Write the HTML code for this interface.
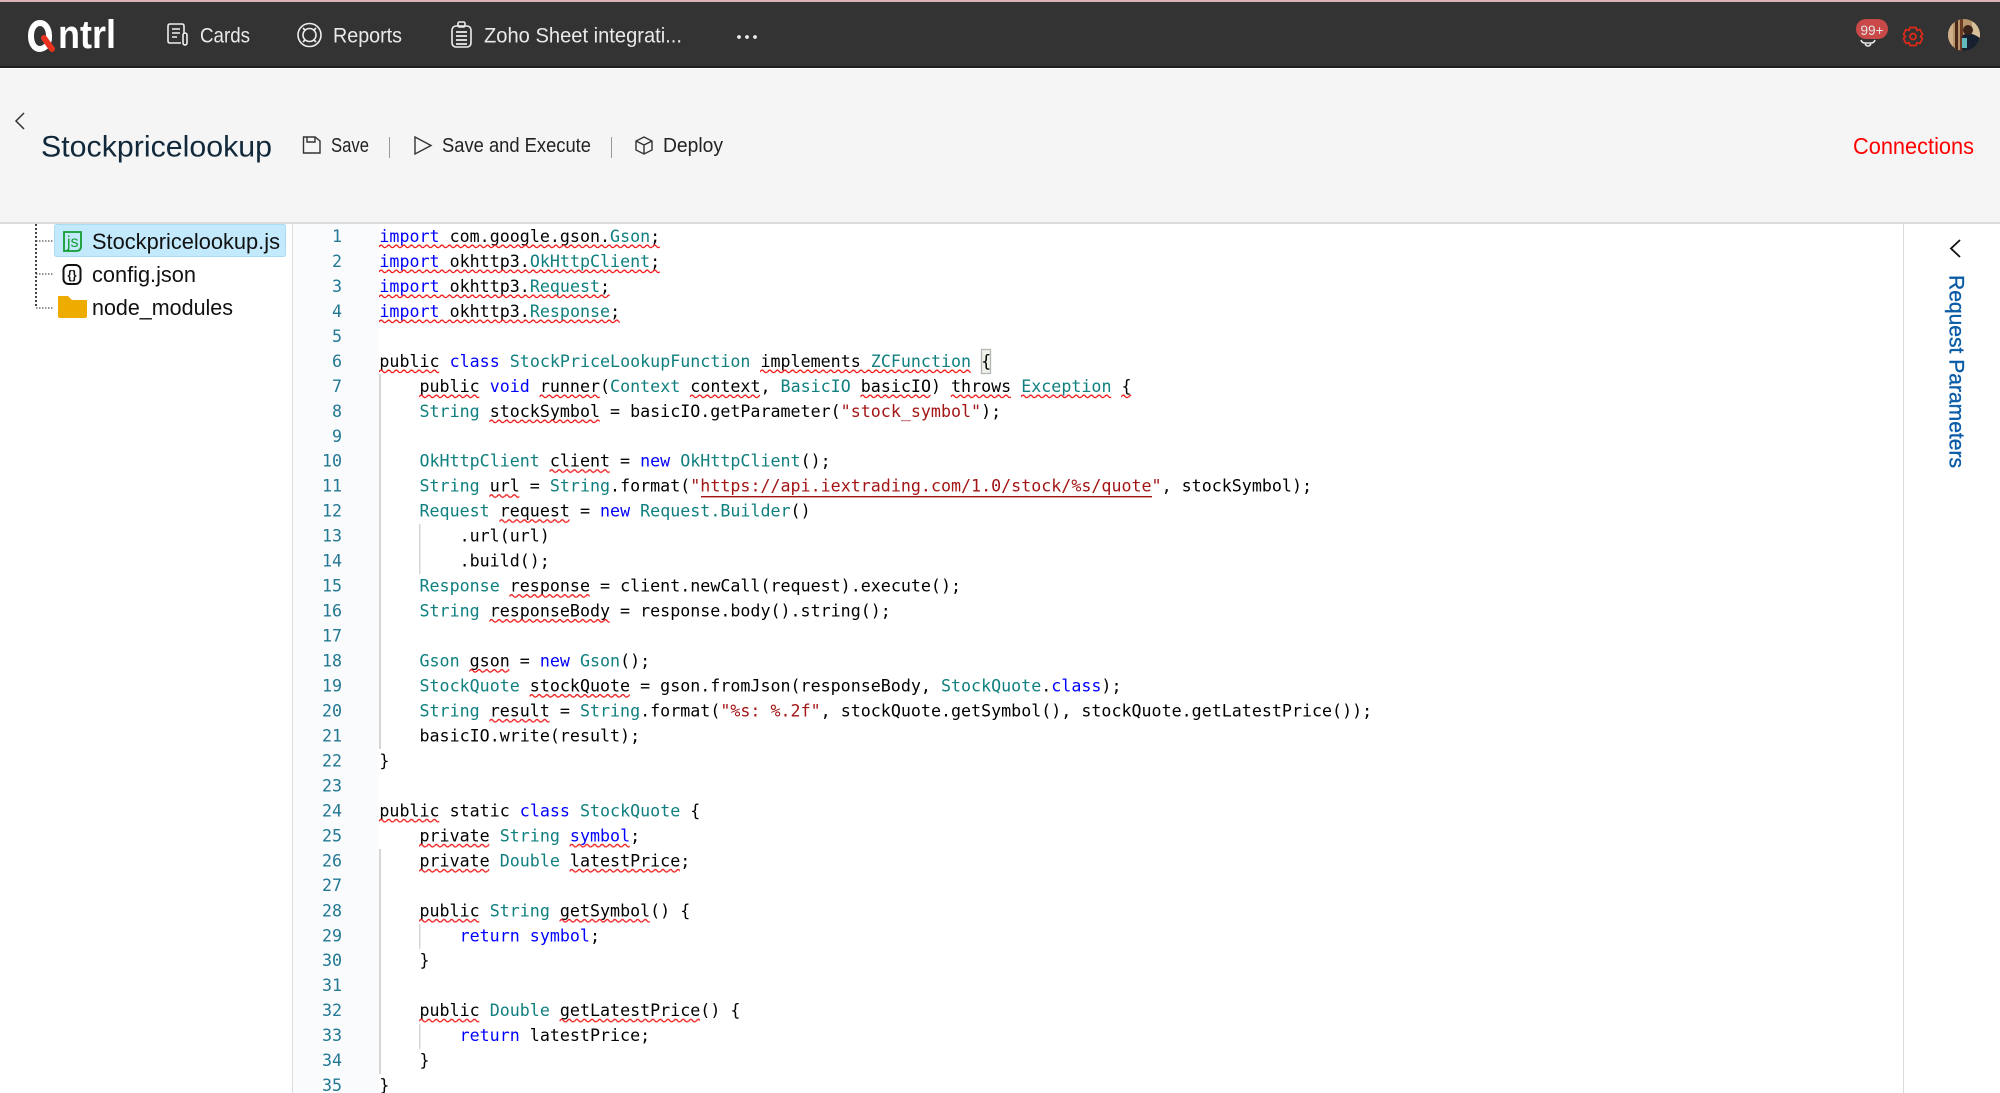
<!DOCTYPE html>
<html><head><meta charset="utf-8"><title>Stockpricelookup</title>
<style>
html,body{margin:0;padding:0;background:#fff;width:2000px;height:1093px;overflow:hidden}
svg{display:block;position:absolute;left:0;top:0}
text{font-family:"Liberation Sans",sans-serif}
.c text,text.c{font-family:"DejaVu Sans Mono",monospace;font-size:16.66px;white-space:pre;fill:#000}
.k{fill:#0000ff}.t{fill:#0f7f7f}.s{fill:#a31515}
.n text{font-family:"DejaVu Sans Mono",monospace;font-size:16.66px;fill:#237893;text-anchor:end}
.q rect{fill:url(#w)}
</style></head><body>
<svg width="2000" height="1093" viewBox="0 0 2000 1093" xmlns="http://www.w3.org/2000/svg">
<defs>
<pattern id="w" patternUnits="userSpaceOnUse" width="7.6" height="5"><path d="M0 3Q1.9 -.4 3.8 2.2T7.6 2.6" fill="none" stroke="#f01818" stroke-width="1.3"/></pattern>
<clipPath id="av"><circle cx="1964" cy="35" r="16"/></clipPath>
</defs>
<!-- top bar -->
<rect width="2000" height="2" fill="#d8b4b8"/>
<rect y="2" width="2000" height="65" fill="#333"/>
<rect y="66" width="2000" height="2" fill="#1f1f1f"/>
<rect y="68" width="2000" height="1" fill="#fff"/>
<rect y="69" width="2000" height="153" fill="#f5f5f6"/>
<rect y="222" width="2000" height="2" fill="#dcdcdc"/>
<!-- logo -->
<path d="M47 45.500C44 48 42 49 40 49C34 49 31 43 31 36C31 28 35 23 40 23C45 23 49 28 49 36C49 38 49 40 48.500 41" fill="none" stroke="#fff" stroke-width="6" stroke-linecap="round"/>
<path d="M44 38L52 49" stroke="#e8321f" stroke-width="6" stroke-linecap="round"/>
<text x="58" y="48" font-size="40" font-weight="700" fill="#fff" textLength="58" lengthAdjust="spacingAndGlyphs">ntrl</text>
<!-- nav -->
<g fill="none" stroke="#eee" stroke-width="1.6">
<path d="M184 34V26Q184 24 182 24H170Q168 24 168 26V41Q168 43 170 43H181"/><path d="M172 29H180M172 33H180M172 37H177"/><rect x="183" y="33" width="4" height="12" rx="2"/>
<circle cx="309.5" cy="35" r="11.5"/><circle cx="309.5" cy="35" r="6.5"/><path d="M303 28l2 2M316 28l-2 2M303 42l2-2M316 42l-2-2"/>
<rect x="452" y="26" width="19" height="21" rx="4"/><rect x="458" y="22" width="7" height="5" rx="1.5"/><path d="M456 32h11M456 36h11M456 40h11M456 44h11" stroke-width="1.8"/>
</g>
<g fill="#e9e9e9" font-size="21">
<text x="200" y="42.500" textLength="50" lengthAdjust="spacingAndGlyphs">Cards</text>
<text x="333" y="42.500" textLength="69" lengthAdjust="spacingAndGlyphs">Reports</text>
<text x="484" y="42.500" textLength="198" lengthAdjust="spacingAndGlyphs">Zoho Sheet integrati...</text>
</g>
<circle cx="739" cy="37" r="1.9" fill="#eee"/><circle cx="747" cy="37" r="1.9" fill="#eee"/><circle cx="755" cy="37" r="1.9" fill="#eee"/>
<!-- right icons -->
<path d="M1861 40Q1862 43 1865 43H1871Q1874 43 1875 40M1865 44Q1868 48 1871 44" fill="none" stroke="#e8e8e8" stroke-width="1.6"/>
<rect x="1856" y="19" width="32" height="20" rx="10" fill="#c94848"/>
<text x="1872" y="35" font-size="14" fill="#e6e6e6" text-anchor="middle" textLength="23" lengthAdjust="spacingAndGlyphs">99+</text>
<g fill="none" stroke="#e22a18" stroke-width="1.700" stroke-linejoin="round" transform="translate(0,-1.500)">
<path d="M1910 29h6l1 3 3-1 2.500 5-2 2 2 2-2.500 5-3-1-1 3h-6l-1-3-3 1-2.500-5 2-2-2-2 2.500-5 3 1z"/>
<circle cx="1913" cy="38" r="3"/></g>
<g clip-path="url(#av)"><rect x="1948" y="19" width="32" height="32" fill="#b8946c"/><rect x="1948" y="19" width="5" height="32" fill="#d0b08a"/><rect x="1955" y="19" width="3" height="32" fill="#4a2617"/><rect x="1960" y="19" width="3" height="32" fill="#6a3a22"/><rect x="1972" y="19" width="8" height="20" fill="#d6c09a"/><path d="M1962 36Q1968 30 1980 38V52H1962z" fill="#16202f"/><circle cx="1968" cy="30" r="5" fill="#3a241c"/><path d="M1962 38h5v10h-5z" fill="#63b8bd"/></g>
<!-- header content -->
<path d="M24 113L16 121L24 129" fill="none" stroke="#333" stroke-width="1.5"/>
<text x="41" y="156.500" font-size="30" fill="#12293b" textLength="231" lengthAdjust="spacingAndGlyphs">Stockpricelookup</text>
<g fill="none" stroke="#333" stroke-width="1.4">
<path d="M303.500 137H315L320 141V153H303.500z"/><path d="M307 137v5h8v-5"/>
<path d="M415 137L431 145.500L415 154z"/>
<path d="M644 137L652 141V150L644 154L636 150V141z"/><path d="M636 141L644 145L652 141M644 145V154"/>
</g>
<rect x="389" y="137" width="1" height="21" fill="#999"/><rect x="611" y="137" width="1" height="21" fill="#999"/>
<g fill="#222" font-size="20">
<text x="331" y="152.200" textLength="38" lengthAdjust="spacingAndGlyphs">Save</text>
<text x="442" y="152.200" textLength="149" lengthAdjust="spacingAndGlyphs">Save and Execute</text>
<text x="663" y="152.200" textLength="60" lengthAdjust="spacingAndGlyphs">Deploy</text>
</g>
<text x="1853" y="154" font-size="23" fill="#f00" textLength="121" lengthAdjust="spacingAndGlyphs">Connections</text>
<!-- file tree -->
<path d="M36 224V308" fill="none" stroke="#444" stroke-width="2" stroke-dasharray="2 2"/>
<path d="M36 241H54M36 274H54M36 308H54" fill="none" stroke="#555" stroke-width="1.200" stroke-dasharray="1.500 1.500"/>
<rect x="54.500" y="224.500" width="231" height="32" rx="2" fill="#c3eafc" stroke="#aadcf3"/>
<path d="M64 232H81V246Q81 251 76 251H64z" fill="none" stroke="#149a2e" stroke-width="1.800"/>
<text x="67" y="247" font-size="16" fill="#149a2e">js</text>
<rect x="63.500" y="265" width="17" height="19" rx="5" fill="#fff" stroke="#111" stroke-width="2"/>
<text x="72" y="279" font-size="12" fill="#111" text-anchor="middle" font-weight="700">{}</text>
<path d="M58 296H68L72 300H87V316Q87 318 85 318H60Q58 318 58 316z" fill="#eeab00"/>
<g fill="#111" font-size="22">
<text x="92" y="249" textLength="188" lengthAdjust="spacingAndGlyphs">Stockpricelookup.js</text>
<text x="92" y="282" textLength="104" lengthAdjust="spacingAndGlyphs">config.json</text>
<text x="92" y="315" textLength="141" lengthAdjust="spacingAndGlyphs">node_modules</text>
</g>
<!-- panel structure -->
<rect x="292" y="224" width="1" height="869" fill="#dcdcdc"/>
<rect x="293" y="224" width="86" height="869" fill="#fafbfd"/>
<rect x="1903" y="224" width="1" height="869" fill="#dcdcdc"/>
<path d="M1960 240L1951 248.500L1960 257" fill="none" stroke="#111" stroke-width="1.800"/>
<text transform="translate(1949.500,275) rotate(90)" font-size="21" fill="#0b5ca6" stroke="#0b5ca6" stroke-width=".35" textLength="193" lengthAdjust="spacingAndGlyphs">Request Parameters</text>
<!-- guides -->
<g fill="#d6d6d6">
<rect x="379" y="374" width="2" height="375"/><rect x="379" y="849" width="2" height="225"/>
<rect x="419" y="524" width="1.500" height="50"/><rect x="419" y="924" width="1.500" height="25"/><rect x="419" y="1024" width="1.500" height="25"/>
</g>
<rect x="981.500" y="349.500" width="9" height="24" fill="#eef4ea" stroke="#b5b5b5" stroke-width="1.300"/>
<!-- line numbers -->
<g class="n">
<text x="342" y="242">1</text><text x="342" y="267">2</text><text x="342" y="292">3</text><text x="342" y="317">4</text><text x="342" y="342">5</text><text x="342" y="367">6</text><text x="342" y="392">7</text><text x="342" y="417">8</text><text x="342" y="442">9</text><text x="342" y="466.700">10</text><text x="342" y="491.700">11</text><text x="342" y="516.700">12</text><text x="342" y="541.600">13</text><text x="342" y="566.600">14</text><text x="342" y="591.600">15</text><text x="342" y="616.500">16</text><text x="342" y="641.500">17</text><text x="342" y="666.500">18</text><text x="342" y="691.500">19</text><text x="342" y="716.400">20</text><text x="342" y="741.400">21</text><text x="342" y="766.400">22</text><text x="342" y="791.300">23</text><text x="342" y="816.300">24</text><text x="342" y="841.300">25</text><text x="342" y="866.400">26</text><text x="342" y="891.200">27</text><text x="342" y="916.400">28</text><text x="342" y="941.300">29</text><text x="342" y="966.100">30</text><text x="342" y="991.100">31</text><text x="342" y="1016.200">32</text><text x="342" y="1041.200">33</text><text x="342" y="1066">34</text><text x="342" y="1091">35</text>
</g>
<!-- code -->
<g class="c" transform="translate(.4,0)">
<text x="379" y="242"><tspan class="k">import</tspan> com.google.gson.<tspan class="t">Gson</tspan>;</text>
<text x="379" y="267"><tspan class="k">import</tspan> okhttp3.<tspan class="t">OkHttpClient</tspan>;</text>
<text x="379" y="292"><tspan class="k">import</tspan> okhttp3.<tspan class="t">Request</tspan>;</text>
<text x="379" y="317"><tspan class="k">import</tspan> okhttp3.<tspan class="t">Response</tspan>;</text>
<text x="379" y="367">public <tspan class="k">class</tspan> <tspan class="t">StockPriceLookupFunction</tspan> implements <tspan class="t">ZCFunction</tspan> {</text>
<text x="419.100" y="392">public <tspan class="k">void</tspan> runner(<tspan class="t">Context</tspan> context, <tspan class="t">BasicIO</tspan> basicIO) throws <tspan class="t">Exception</tspan> {</text>
<text x="419.100" y="417"><tspan class="t">String</tspan> stockSymbol = basicIO.getParameter(<tspan class="s">"stock_symbol"</tspan>);</text>
<text x="419.100" y="466.700"><tspan class="t">OkHttpClient</tspan> client = <tspan class="k">new</tspan> <tspan class="t">OkHttpClient</tspan>();</text>
<text x="419.100" y="491.700"><tspan class="t">String</tspan> url = <tspan class="t">String</tspan>.format(<tspan class="s">"https://api.iextrading.com/1.0/stock/%s/quote"</tspan>, stockSymbol);</text>
<text x="419.100" y="516.700"><tspan class="t">Request</tspan> request = <tspan class="k">new</tspan> <tspan class="t">Request.Builder</tspan>()</text>
<text x="459.200" y="541.600">.url(url)</text>
<text x="459.200" y="566.600">.build();</text>
<text x="419.100" y="591.600"><tspan class="t">Response</tspan> response = client.newCall(request).execute();</text>
<text x="419.100" y="616.500"><tspan class="t">String</tspan> responseBody = response.body().string();</text>
<text x="419.100" y="666.500"><tspan class="t">Gson</tspan> gson = <tspan class="k">new</tspan> <tspan class="t">Gson</tspan>();</text>
<text x="419.100" y="691.500"><tspan class="t">StockQuote</tspan> stockQuote = gson.fromJson(responseBody, <tspan class="t">StockQuote</tspan>.<tspan class="k">class</tspan>);</text>
<text x="419.100" y="716.400"><tspan class="t">String</tspan> result = <tspan class="t">String</tspan>.format(<tspan class="s">"%s: %.2f"</tspan>, stockQuote.getSymbol(), stockQuote.getLatestPrice());</text>
<text x="419.100" y="741.400">basicIO.write(result);</text>
<text x="379" y="766.400">}</text>
<text x="379" y="816.300">public static <tspan class="k">class</tspan> <tspan class="t">StockQuote</tspan> {</text>
<text x="419.100" y="841.300">private <tspan class="t">String</tspan> <tspan class="k">symbol</tspan>;</text>
<text x="419.100" y="866.400">private <tspan class="t">Double</tspan> latestPrice;</text>
<text x="419.100" y="916.400">public <tspan class="t">String</tspan> getSymbol() {</text>
<text x="459.200" y="941.300"><tspan class="k">return</tspan> <tspan class="k">symbol</tspan>;</text>
<text x="419.100" y="966.100">}</text>
<text x="419.100" y="1016.200">public <tspan class="t">Double</tspan> getLatestPrice() {</text>
<text x="459.200" y="1041.200"><tspan class="k">return</tspan> latestPrice;</text>
<text x="419.100" y="1066">}</text>
<text x="379" y="1091">}</text>
</g>
<rect x="701" y="496" width="451" height="1.400" fill="#a31515"/>
<!-- squiggles -->
<g class="q">
<rect transform="translate(379,244)" width="280.800" height="5"/>
<rect transform="translate(379,269)" width="280.800" height="5"/>
<rect transform="translate(379,294)" width="230.700" height="5"/>
<rect transform="translate(379,319)" width="240.700" height="5"/>
<rect transform="translate(379,369)" width="60.200" height="5"/>
<rect transform="translate(760.100,369)" width="210.600" height="5"/>
<rect transform="translate(419.100,394)" width="60.200" height="5"/>
<rect transform="translate(539.500,394)" width="60.200" height="5"/>
<rect transform="translate(689.900,394)" width="70.200" height="5"/>
<rect transform="translate(860.400,394)" width="70.200" height="5"/>
<rect transform="translate(950.700,394)" width="60.200" height="5"/>
<rect transform="translate(1020.900,394)" width="90.300" height="5"/>
<rect transform="translate(1121.200,394)" width="10" height="5"/>
<rect transform="translate(489.300,419)" width="110.300" height="5"/>
<rect transform="translate(549.500,468.700)" width="60.200" height="5"/>
<rect transform="translate(489.300,493.700)" width="30.100" height="5"/>
<rect transform="translate(499.400,518.700)" width="70.200" height="5"/>
<rect transform="translate(509.400,593.600)" width="80.200" height="5"/>
<rect transform="translate(489.300,618.500)" width="120.400" height="5"/>
<rect transform="translate(469.300,668.500)" width="40.100" height="5"/>
<rect transform="translate(529.500,693.500)" width="100.300" height="5"/>
<rect transform="translate(489.300,718.400)" width="60.200" height="5"/>
<rect transform="translate(379,818.300)" width="60.200" height="5"/>
<rect transform="translate(419.100,843.300)" width="70.200" height="5"/>
<rect transform="translate(569.600,843.300)" width="60.200" height="5"/>
<rect transform="translate(419.100,868.400)" width="70.200" height="5"/>
<rect transform="translate(569.600,868.400)" width="110.300" height="5"/>
<rect transform="translate(419.100,918.400)" width="60.200" height="5"/>
<rect transform="translate(559.500,918.400)" width="90.300" height="5"/>
<rect transform="translate(419.100,1018.200)" width="60.200" height="5"/>
<rect transform="translate(559.500,1018.200)" width="140.400" height="5"/>
</g>
</svg>
</body></html>
